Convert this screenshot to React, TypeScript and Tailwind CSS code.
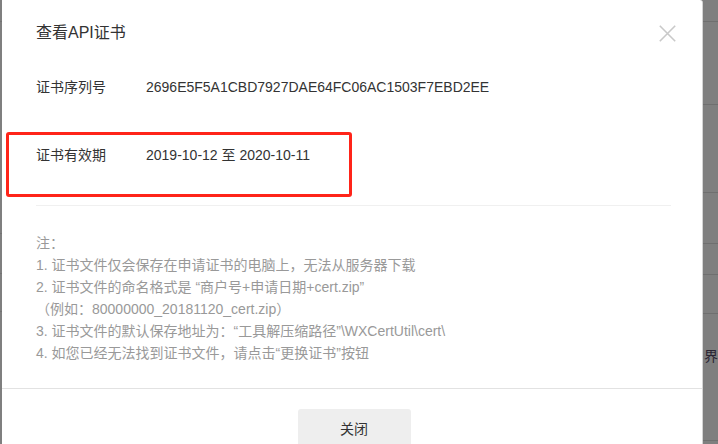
import React from "react";

const font = { fontFamily: '"Liberation Sans", Arial, "Noto Sans CJK SC", sans-serif' };

const notes = [
  "注：",
  "1. 证书文件仅会保存在申请证书的电脑上，无法从服务器下载",
  "2. 证书文件的命名格式是 “商户号+申请日期+cert.zip”",
  "（例如：80000000_20181120_cert.zip）",
  "3. 证书文件的默认保存地址为：“工具解压缩路径”\\WXCertUtil\\cert\\",
  "4. 如您已经无法找到证书文件，请点击“更换证书”按钮",
];

// 右侧遮罩下露出的表格行
const stripRows = [22, 83, 88, 51, 31, 39, 127];

export default function App() {
  return (
    <div className="flex h-[444px] w-[718px] overflow-hidden bg-[#7f7f7f]" style={font}>
      {/* 左侧遮罩 */}
      <div className="flex w-[2px] shrink-0 flex-col">
        <div className="h-[22px] border-b border-[#737373]" />
        <div className="h-[212px] border-b border-[#737373]" />
        <div className="h-[40px] border-b border-[#737373]" />
        <div className="h-[38px] border-b border-[#737373]" />
      </div>

      {/* 弹窗 */}
      <div className="flex w-[701px] shrink-0 flex-col overflow-hidden rounded-tr-[3px] border-r border-[#d4d4d4] bg-white">
        <div className="flex h-[66px] shrink-0 items-center justify-between pl-[34px] pr-[26px]">
          <span className="text-[16px] text-[#333]">查看API证书</span>
          <svg width="17" height="17" viewBox="0 0 17 17" className="mt-[1px]">
            <path d="M0.8 0.8 L16.2 16.2 M16.2 0.8 L0.8 16.2" stroke="#c9c9c9" strokeWidth="1.6" fill="none" />
          </svg>
        </div>

        <div className="flex shrink-0 flex-col pl-[34px] text-[14px] leading-[22px] text-[#333]">
          <div className="mt-[10px] flex">
            <span className="w-[110px] shrink-0">证书序列号</span>
            <span>2696E5F5A1CBD7927DAE64FC06AC1503F7EBD2EE</span>
          </div>

          <div className="relative mt-[46px] flex">
            <span className="w-[110px] shrink-0">证书有效期</span>
            <span>2019-10-12 至 2020-10-11</span>
            {/* 红色标注框 */}
            <div className="absolute left-[-30px] top-[-12px] h-[65px] w-[346px] rounded-[3px] border-[3px] border-[#ff2419]" />
          </div>

          <div className="mr-[31px] mt-[39px] border-b border-[#f0f0f0]" />

          <div className="mt-[26px] flex flex-col text-[#999]">
            {notes.map((n) => (
              <span key={n} className="whitespace-nowrap">
                {n}
              </span>
            ))}
          </div>
        </div>

        <div className="mt-[24px] flex shrink-0 justify-center border-t border-[#e2e2e2] pt-[20px]">
          <div className="ml-[4px] flex h-[40px] w-[113px] items-center justify-center rounded-[3px] bg-[#eeeeee] text-[14px] text-[#333]">
            关闭
          </div>
        </div>
      </div>

      {/* 右侧遮罩 */}
      <div className="flex flex-1 flex-col">
        {stripRows.map((h, i) => (
          <div
            key={i}
            className="relative shrink-0 border-b border-[#6f6f6f]"
            style={{ height: h }}
          >
            {i === 6 && (
              <span className="absolute left-[1px] top-[31px] text-[14px] leading-[22px] text-[#2a2433]">
                界
              </span>
            )}
          </div>
        ))}
      </div>
    </div>
  );
}
